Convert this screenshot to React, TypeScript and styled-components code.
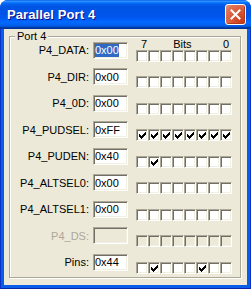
import React from "react"
import styled, { createGlobalStyle } from "styled-components"

const GlobalStyle = createGlobalStyle`
  html, body {
    margin: 0;
    padding: 0;
    background: #ffffff;
  }
  body {
    font-family: "Liberation Sans", Arial, sans-serif;
    font-size: 11px;
    color: #000000;
  }
`

type Register = {
  name: string
  value: string
  bits: number
  selected?: boolean
  disabled?: boolean
}

const registers: Register[] = [
  { name: "P4_DATA", value: "0x00", bits: 0x00, selected: true },
  { name: "P4_DIR", value: "0x00", bits: 0x00 },
  { name: "P4_0D", value: "0x00", bits: 0x00 },
  { name: "P4_PUDSEL", value: "0xFF", bits: 0xff },
  { name: "P4_PUDEN", value: "0x40", bits: 0x40 },
  { name: "P4_ALTSEL0", value: "0x00", bits: 0x00 },
  { name: "P4_ALTSEL1", value: "0x00", bits: 0x00 },
  { name: "P4_DS", value: "", bits: 0x00, disabled: true },
  { name: "Pins", value: "0x44", bits: 0x44 },
]

const BIT_ORDER = [7, 6, 5, 4, 3, 2, 1, 0]

export default function App() {
  return (
    <>
      <GlobalStyle/>
      <Window>
        <TitleBar>
          <Title>Parallel Port 4</Title>
          <CloseButton aria-label="Close">
            <svg width="11" height="11" viewBox="0 0 11 11">
              <path d="M1.5 1.5l8 8M9.5 1.5l-8 8" stroke="#fff" strokeWidth="2" strokeLinecap="square"/>
            </svg>
          </CloseButton>
        </TitleBar>
        <Frame>
          <Client>
            <GroupBox>
              <Legend>Port 4</Legend>
              <Grid>
                {registers.map((reg, i) => (
                  <React.Fragment key={reg.name}>
                    <Label $disabled={reg.disabled}>{reg.name}:</Label>
                    <Field $disabled={reg.disabled}>
                      {reg.selected ? <Selection>{reg.value}</Selection> : reg.value}
                    </Field>
                    <BitsCell>
                      {i === 0 &&
                        <BitsHeader>
                          <span>7</span>
                          <BitsWord>Bits</BitsWord>
                          <BitZero>0</BitZero>
                        </BitsHeader>
                      }
                      <BitRow>
                        {BIT_ORDER.map(b => (
                          <CheckBox key={b} $disabled={reg.disabled}>
                            {(reg.bits >> b) & 1 ? <CheckMark/> : null}
                          </CheckBox>
                        ))}
                      </BitRow>
                    </BitsCell>
                  </React.Fragment>
                ))}
              </Grid>
            </GroupBox>
          </Client>
        </Frame>
      </Window>
    </>
  )
}

const CheckMark = () =>
  <svg width="7" height="7" viewBox="0 0 7 7" shapeRendering="crispEdges">
    <path
      fill="#000"
      d="M0 2h1v3H0zM1 3h1v3H1zM2 4h1v3H2zM3 3h1v3H3zM4 2h1v3H4zM5 1h1v3H5zM6 0h1v3H6z"/>
  </svg>

const Window = styled.div`
  width: 251px;
  height: 289px;
  display: flex;
  flex-direction: column;
  border-radius: 8px 8px 0 0;
  overflow: hidden;
  background: #0054e3;
`

const TitleBar = styled.div`
  height: 29px;
  flex-shrink: 0;
  display: flex;
  align-items: center;
  justify-content: space-between;
  padding: 0 5px 0 7px;
  box-sizing: border-box;
  background: linear-gradient(180deg,
    #0058ee 0%, #3593ff 4%, #288eff 6%, #127dff 8%, #036ffc 10%,
    #0262ee 14%, #0057e5 20%, #0054e3 24%, #0055eb 56%, #005bf5 66%,
    #026afe 76%, #0062ef 86%, #0052d6 92%, #0040ab 94%, #003092 100%);
`

const Title = styled.span`
  font-family: "Liberation Sans", Arial, sans-serif;
  font-weight: bold;
  font-size: 13px;
  color: #ffffff;
  text-shadow: 1px 1px #0f1089;
  letter-spacing: 0.1px;
`

const CloseButton = styled.div`
  width: 21px;
  height: 21px;
  box-sizing: border-box;
  border: 1px solid #ffffff;
  border-radius: 3px;
  display: flex;
  align-items: center;
  justify-content: center;
  background: radial-gradient(circle at 85% 85%, #c83d17 0%, #d4502d 35%, #e07455 80%, #ea9780 100%);
  box-shadow: inset -1px -1px 0 #b2391a;
`

const Frame = styled.div`
  flex: 1;
  display: flex;
  padding: 0 4px 4px;
  background: #0a5de8;
  box-shadow: inset 1px 0 #0c33c8, inset -1px 0 #0c33c8, inset 0 -1px #0c27a6;
`

const Client = styled.div`
  flex: 1;
  display: flex;
  background: #ece9d8;
  padding: 1px 6px 7px 5px;
`

const GroupBox = styled.fieldset`
  flex: 1;
  margin: 0;
  padding: 0;
  min-width: 0;
  border: 1px solid #aca899;
  box-shadow: 1px 1px 0 #ffffff, inset 1px 1px 0 #ffffff;
`

const Legend = styled.legend`
  margin-left: 5px;
  padding: 0 2px;
  line-height: 12px;
  background: #ece9d8;
`

const Grid = styled.div`
  display: grid;
  grid-template-columns: 79px 39px 96px;
  grid-auto-rows: 26.5px;
  column-gap: 4px;
  margin-top: -5px;
`

const Label = styled.span<{ $disabled?: boolean }>`
  justify-self: end;
  align-self: center;
  white-space: nowrap;
  color: ${({ $disabled }) => $disabled ? "#aca899" : "#000000"};
`

const Field = styled.div<{ $disabled?: boolean }>`
  width: 35px;
  height: 17px;
  box-sizing: border-box;
  align-self: center;
  display: flex;
  align-items: center;
  padding-left: 1px;
  overflow: hidden;
  white-space: nowrap;
  background: ${({ $disabled }) => $disabled ? "#ece9d8" : "#ffffff"};
  border-style: solid;
  border-width: 1px;
  border-color: #aca899 #ffffff #ffffff #aca899;
  box-shadow: inset 1px 1px 0 #716f64, inset -1px -1px 0 #f1efe2;
`

const Selection = styled.span`
  background: #316ac5;
  color: #ffffff;
  line-height: 13px;
`

const BitsCell = styled.div`
  align-self: end;
  display: flex;
  flex-direction: column;
  padding-bottom: 2px;
`

const BitsHeader = styled.div`
  display: flex;
  line-height: 10px;
  margin-bottom: 1px;
  padding: 0 3px 0 5px;
`

const BitsWord = styled.span`
  margin-left: 26px;
`

const BitZero = styled.span`
  margin-left: auto;
`

const BitRow = styled.div`
  display: flex;
`

const CheckBox = styled.div<{ $disabled?: boolean }>`
  width: 12px;
  height: 12px;
  box-sizing: border-box;
  display: flex;
  align-items: center;
  justify-content: center;
  padding: 1px 0 0 1px;
  background: ${({ $disabled }) => $disabled ? "#ece9d8" : "#ffffff"};
  border-style: solid;
  border-width: 1px;
  border-color: #aca899 #ffffff #ffffff #aca899;
  box-shadow: inset 1px 1px 0 #716f64, inset -1px -1px 0 #f1efe2;
`
